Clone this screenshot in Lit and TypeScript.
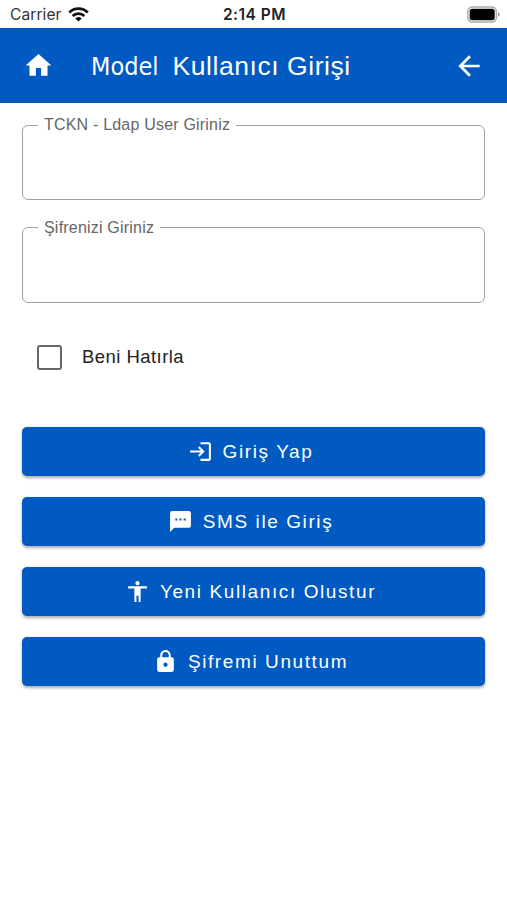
import { LitElement, html, css, svg } from "lit";
import { customElement, property } from "lit/decorators.js";

const icons = {
  home: svg`<path d="M10 20v-6h4v6h5v-8h3L12 3 2 12h3v8z"/>`,
  back: svg`<path d="M20 11H7.83l5.59-5.59L12 4l-8 8 8 8 1.41-1.41L7.83 13H20z"/>`,
  login: svg`<path d="M11 7 9.6 8.4l2.6 2.6H2v2h10.2l-2.6 2.6L11 17l5-5zM20 19h-8v2h8c1.1 0 2-.9 2-2V5c0-1.1-.9-2-2-2h-8v2h8z"/>`,
  sms: svg`<path d="M20 2H4c-1.1 0-1.99.9-1.99 2L2 22l4-4h14c1.1 0 2-.9 2-2V4c0-1.1-.9-2-2-2zM9 11H7V9h2zm4 0h-2V9h2zm4 0h-2V9h2z"/>`,
  person: svg`<path d="M12 2c1.1 0 2 .9 2 2s-.9 2-2 2-2-.9-2-2 .9-2 2-2zm9 7h-6v13h-2v-6h-2v6H9V9H3V7h18z"/>`,
  lock: svg`<path d="M18 8h-1V6c0-2.76-2.24-5-5-5S7 3.24 7 6v2H6c-1.1 0-2 .9-2 2v10c0 1.1.9 2 2 2h12c1.1 0 2-.9 2-2V10c0-1.1-.9-2-2-2zm-6 9c-1.1 0-2-.9-2-2s.9-2 2-2 2 .9 2 2-.9 2-2 2zm3.1-9H8.9V6c0-1.71 1.39-3.1 3.1-3.1s3.1 1.39 3.1 3.1z"/>`,
};
type IconName = keyof typeof icons;

@customElement("app-icon")
class AppIcon extends LitElement {
  @property() name: IconName = "home";
  static styles = css`
    :host { display: block; flex: none; }
    svg { display: block; width: 100%; height: 100%; fill: currentColor; }
  `;
  render() {
    return html`<svg viewBox="0 0 24 24">${icons[this.name]}</svg>`;
  }
}

@customElement("app-root")
class AppRoot extends LitElement {
  static styles = css`
    :host {
      display: block;
      height: 900px;
      overflow: hidden;
      background: #fff;
      font-family: "Liberation Sans", Arial, sans-serif;
    }
    .status {
      display: grid;
      grid-template-columns: 1fr auto 1fr;
      align-items: center;
      height: 28px;
      box-sizing: border-box;
      padding: 1px 8px 0 10px;
      font-family: Inter, sans-serif;
      font-size: 15.5px;
      color: #333;
    }
    .carrier { display: flex; align-items: center; gap: 6px; letter-spacing: 0.1px; }
    .wifi { display: block; width: 21px; height: 15px; }
    .clock { font-weight: 600; color: #222; letter-spacing: 0.5px; }
    .battery { display: block; justify-self: end; width: 33px; height: 17px; margin-right: -1px; }
    .bar {
      display: flex;
      align-items: center;
      height: 75px;
      box-sizing: border-box;
      padding: 0 22px 0 23px;
      background: #005ac1;
      color: #fff;
    }
    .home { width: 31px; height: 31px; }
    .back { width: 32px; height: 32px; margin-left: auto; }
    .title {
      display: flex;
      align-items: baseline;
      gap: 14px;
      margin: 1px 0 0 37px;
      font-size: 26.5px;
      font-weight: 400;
      line-height: 32px;
      white-space: nowrap;
      letter-spacing: 0.55px;
    }
    .brand {
      font-family: "DejaVu Sans Condensed", "DejaVu Sans", sans-serif;
      font-stretch: condensed;
      font-size: 25px;
      letter-spacing: 0;
    }
    .page { padding: 13px 22px 0; }
    .field {
      box-sizing: border-box;
      height: 84px;
      margin: 0 0 18.5px;
      padding: 0 0 0 15px;
      border: 1.5px solid #a2a2a2;
      border-radius: 6px;
      min-width: 0;
    }
    .legend {
      padding: 0 6px;
      font-size: 16px;
      line-height: 18px;
      letter-spacing: 0.2px;
      color: #666;
    }
    .remember {
      display: flex;
      align-items: center;
      gap: 20px;
      height: 26px;
      margin: 41.5px 0 0 15px;
      font-size: 18.5px;
      letter-spacing: 0.45px;
      color: #222;
    }
    .check {
      width: 25px;
      height: 25px;
      box-sizing: border-box;
      border: 2.5px solid #666;
      border-radius: 3px;
    }
    .actions { display: grid; gap: 21px; margin-top: 57px; }
    .action {
      display: flex;
      align-items: center;
      justify-content: center;
      gap: 10px;
      height: 49px;
      padding: 0 6px 0 0;
      border: 0;
      border-radius: 5px;
      background: #005ac1;
      color: #fff;
      box-shadow: 0 1.5px 3px rgba(0, 0, 0, 0.32);
      font: 400 19px/24px "Liberation Sans", Arial, sans-serif;
      letter-spacing: 1.6px;
    }
    .glyph { width: 25px; height: 25px; }
  `;

  private action(icon: IconName, label: string) {
    return html`<button class="action">
      <app-icon class="glyph" name=${icon}></app-icon><span>${label}</span>
    </button>`;
  }

  render() {
    return html`
      <div class="status">
        <div class="carrier">
          <span>Carrier</span>
          <svg class="wifi" viewBox="0 0 21 15" fill="none" stroke="#111" stroke-width="2.7">
            <path d="M1.2 5.5a13.2 13.2 0 0 1 18.6 0" />
            <path d="M4.6 9a8.4 8.4 0 0 1 11.8 0" />
            <path d="M10.5 14.6 7.3 11.4a4.7 4.7 0 0 1 6.4 0z" fill="#111" stroke="none" />
          </svg>
        </div>
        <span class="clock">2:14 PM</span>
        <svg class="battery" viewBox="0 0 33 17">
          <rect x="0.9" y="0.9" width="28.5" height="15.2" rx="4.5" fill="#fff" stroke="#aaa" stroke-width="1.5" />
          <rect x="2.7" y="2.7" width="25" height="11.6" rx="2.5" fill="#000" />
          <path d="M31 6.3q1.7.6 1.7 2.2T31 10.7z" fill="#999" />
        </svg>
      </div>
      <header class="bar">
        <app-icon class="home" name="home"></app-icon>
        <h1 class="title"><span class="brand">Model</span><span>Kullanıcı Girişi</span></h1>
        <app-icon class="back" name="back"></app-icon>
      </header>
      <main class="page">
        <fieldset class="field"><legend class="legend">TCKN - Ldap User Giriniz</legend></fieldset>
        <fieldset class="field"><legend class="legend">Şifrenizi Giriniz</legend></fieldset>
        <label class="remember"><span class="check"></span><span>Beni Hatırla</span></label>
        <div class="actions">
          ${this.action("login", "Giriş Yap")} ${this.action("sms", "SMS ile Giriş")}
          ${this.action("person", "Yeni Kullanıcı Olustur")} ${this.action("lock", "Şifremi Unuttum")}
        </div>
      </main>
    `;
  }
}
